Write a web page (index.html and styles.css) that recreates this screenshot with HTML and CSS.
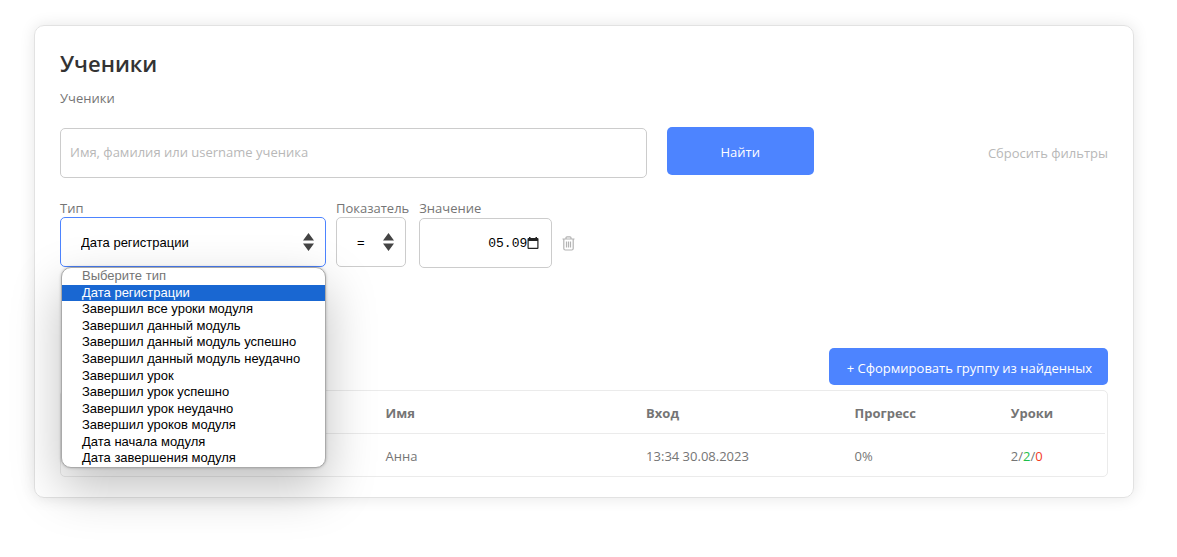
FILE: index.html
```html
<!DOCTYPE html>
<html lang="ru">
<head>
<meta charset="utf-8">
<title>Ученики</title>
<link rel="stylesheet" href="styles.css">
</head>
<body>
<main class="card">
  <h1 class="title">Ученики</h1>
  <p class="breadcrumb">Ученики</p>

  <form class="search">
    <input class="control search-input" type="text" aria-label="Поиск ученика" placeholder="Имя, фамилия или username ученика">
    <button class="button search-button" type="submit">Найти</button>
    <a class="reset" href="#">Сбросить фильтры</a>
  </form>

  <div class="filters">
    <div class="field field-type">
      <label for="type">Тип</label>
      <div class="select-wrap">
        <select class="control select is-open" id="type">
          <option selected>Дата регистрации</option>
        </select>
        <svg class="arrows" viewBox="0 0 11 18" aria-hidden="true"><path d="M5.500 0 11 7.500H0zM0 10.500h11L5.500 18z"/></svg>
      </div>
      <ul class="options" role="listbox" aria-label="Тип">
        <li class="muted" role="option">Выберите тип</li>
        <li class="selected" role="option" aria-selected="true">Дата регистрации</li>
        <li role="option">Завершил все уроки модуля</li>
        <li role="option">Завершил данный модуль</li>
        <li role="option">Завершил данный модуль успешно</li>
        <li role="option">Завершил данный модуль неудачно</li>
        <li role="option">Завершил урок</li>
        <li role="option">Завершил урок успешно</li>
        <li role="option">Завершил урок неудачно</li>
        <li role="option">Завершил уроков модуля</li>
        <li role="option">Дата начала модуля</li>
        <li role="option">Дата завершения модуля</li>
      </ul>
    </div>
    <div class="field">
      <label for="operator">Показатель</label>
      <div class="select-wrap operator">
        <select class="control select" id="operator">
          <option selected>=</option>
        </select>
        <svg class="arrows" viewBox="0 0 11 18" aria-hidden="true"><path d="M5.500 0 11 7.500H0zM0 10.500h11L5.500 18z"/></svg>
      </div>
    </div>
    <div class="field">
      <label for="value">Значение</label>
      <div class="control date">
        <input class="date-input" id="value" type="text" value="05.09">
        <button class="icon-button" type="button" aria-label="Открыть календарь">
          <svg class="calendar" viewBox="0 0 12 12" aria-hidden="true"><path fill="#222" fill-rule="evenodd" d="M2 0h1.500v1h5V0H10v1h.5a1 1 0 0 1 1 1v9a1 1 0 0 1-1 1h-9a1 1 0 0 1-1-1V2a1 1 0 0 1 1-1H2zM1.700 4v6.800h8.600V4z"/></svg>
        </button>
      </div>
    </div>
    <button class="icon-button remove" type="button" aria-label="Удалить фильтр">
      <svg class="trash" viewBox="0 0 13 15" aria-hidden="true" fill="none" stroke="#b3b3b3" stroke-width="1.200"><path d="M.5 3h12M4 3V1.800Q4 .8 5 .8h3q1 0 1 1V3M1.800 3v9.500q0 1.500 1.500 1.500h6.400q1.500 0 1.500-1.500V3M4.500 5.500v6M6.500 5.500v6M8.500 5.500v6"/></svg>
    </button>
  </div>

  <div class="actions">
    <button class="button group-button" type="button">+ Сформировать группу из найденных</button>
  </div>

  <table class="students">
    <colgroup><col class="c-user"><col class="c-name"><col class="c-login"><col class="c-progress"><col class="c-lessons"></colgroup>
    <thead>
      <tr><th></th><th>Имя</th><th>Вход</th><th>Прогресс</th><th>Уроки</th></tr>
    </thead>
    <tbody>
      <tr><td></td><td>Анна</td><td>13:34 30.08.2023</td><td>0%</td><td>2/<span class="passed">2</span>/<span class="failed">0</span></td></tr>
    </tbody>
  </table>
</main>
</body>
</html>
```
FILE: styles.css
```css
* { box-sizing: border-box; }

body {
  margin: 0;
  min-height: 100vh;
  padding: 25px 43px 40px 34px;
  background: #fff;
  color: #757575;
  font: 13px/18px "Open Sans", "Noto Sans", sans-serif;
}

input, select, button { font: inherit; }

.card {
  padding: 24px 25px 20px;
  border: 1px solid #e2e2e2;
  border-radius: 10px;
  box-shadow: 0 0 15px rgba(0, 0, 0, .1);
}

.title {
  margin: 0;
  color: #333;
  font-size: 22px;
  line-height: 26px;
  font-weight: 600;
}

.breadcrumb { margin: 13px 0 20px; }

.control {
  width: 100%;
  height: 50px;
  border: 1px solid #ccc;
  border-radius: 5px;
  background: #fff;
  outline: 0;
}

.button {
  border: 0;
  border-radius: 5px;
  background: #4d84ff;
  color: #fff;
}

.search { display: flex; align-items: flex-start; gap: 20px; }
.search-input { width: 56%; margin-top: 1px; padding: 0 9px 2px; }
.search-input::placeholder { color: #b8b8b8; opacity: 1; }
.search-button { width: 14%; height: 48px; padding: 2px 0 0; }
.reset {
  margin-left: auto;
  line-height: 52px;
  color: #b8b8b8;
  text-decoration: none;
}

.filters { display: flex; gap: 10px; margin-top: 20px; }
.field { position: relative; }
.field label { display: block; }
.field-type { width: 266px; }

.select-wrap { display: grid; align-items: center; }
.operator { width: 70px; }
.select-wrap > * { grid-area: 1 / 1; }
.select {
  appearance: none;
  padding: 2px 20px 0;
  color: #000;
  font-family: "Liberation Sans", Arial, sans-serif;
}
.select.is-open { border-color: #4d84ff; }
.arrows {
  justify-self: end;
  width: 11px;
  height: 18px;
  margin-right: 12px;
  fill: #444;
  pointer-events: none;
}

.options {
  position: absolute;
  z-index: 1;
  top: 68px;
  left: 1px;
  display: grid;
  grid-auto-rows: 1fr;
  width: 265px;
  height: 201px;
  margin: 0;
  padding: 0;
  overflow: hidden;
  border: 1px solid #aaa;
  border-radius: 10px;
  background: #fff;
  box-shadow: 0 20px 50px rgba(0, 0, 0, .25), 0 0 3px rgba(0, 0, 0, .25);
  color: #000;
  font: 13px/16px "Liberation Sans", Arial, sans-serif;
  list-style: none;
}
.options li { padding-left: 20px; }
.options .muted { color: #757575; }
.options .selected { background: #1967d2; color: #fff; }

.date { display: flex; align-items: center; width: 133px; margin-top: 1px; padding: 0 12px; }
.date-input {
  flex: 1;
  min-width: 0;
  padding: 2px 0 0;
  border: 0;
  outline: 0;
  background: none;
  color: #000;
  font-family: "Liberation Mono", monospace;
  text-align: right;
}
.icon-button {
  display: flex;
  align-items: center;
  padding: 0;
  border: 0;
  background: none;
}
.calendar { width: 12px; height: 12px; }
.remove { height: 50px; align-self: flex-end; }
.trash { width: 13px; height: 15px; }

.actions { display: flex; justify-content: flex-end; margin: 80px 0 5px; }
.group-button { height: 37px; padding: 2px 16px 0 18px; }

.students {
  width: 100%;
  padding: 0 2px;
  border: 1px solid #ebebeb;
  border-radius: 5px;
  border-spacing: 0;
  table-layout: fixed;
}
.students th, .students td { padding: 13px 10px 11px; text-align: left; }
.students th { border-bottom: 1px solid #ebebeb; font-weight: 700; }
.c-user { width: 30%; }
.c-name { width: 25%; }
.c-login { width: 20%; }
.c-progress { width: 15%; }
.c-lessons { width: 10%; }
.passed { color: #1fbf4b; }
.failed { color: #f43b1f; }
```
